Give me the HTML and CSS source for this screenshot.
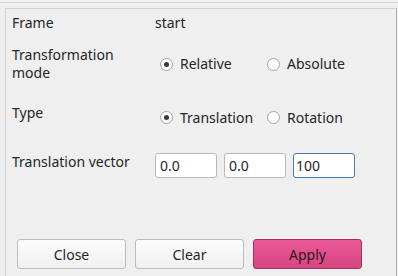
FILE: index.html
```html
<!DOCTYPE html>
<html lang="en">
<head>
  <meta charset="UTF-8" />
  <title>Transform frame</title>
  <link rel="stylesheet" href="styles.css">
</head>
<body>
  <div class="topline"></div>

  <div class="panel">
    <div class="form">
      <div class="label">Frame</div>
      <div class="value">start</div>

      <div class="label">Transformation<br>mode</div>
      <div class="value options">
        <label class="radio"><span class="dot checked"></span>Relative</label>
        <label class="radio"><span class="dot"></span>Absolute</label>
      </div>

      <div class="label top type">Type</div>
      <div class="value options shifted">
        <label class="radio"><span class="dot checked"></span>Translation</label>
        <label class="radio"><span class="dot"></span>Rotation</label>
      </div>

      <div class="label top vector">Translation vector</div>
      <div class="value fields">
        <input type="text" value="0.0">
        <input type="text" value="0.0">
        <input type="text" value="100" class="focused">
      </div>
    </div>

    <div class="actions">
      <button>Close</button>
      <button>Clear</button>
      <button class="primary">Apply</button>
    </div>
  </div>
</body>
</html>
```

FILE: styles.css
```css
* {
  box-sizing: border-box;
}

body {
  margin: 0;
  background: #efefef;
  font-family: "Noto Sans", sans-serif;
  font-size: 14px;
  color: #232627;
  height: 276px;
  overflow: hidden;
}

.topline {
  height: 3px;
  border-bottom: 1px solid #d6d6d6;
}

.panel {
  margin: 5px 1px 0 5px;
  height: 268px;
  border: 1px solid #d2d2d2;
  border-bottom: none;
  border-right-color: #acacac;
  padding: 0 0 0 6px;
}

.form {
  display: grid;
  grid-template-columns: 143px 1fr;
  grid-template-rows: 26px 56px 47px 52px;
  align-items: center;
  line-height: 18px;
  padding-top: 1px;
}

.label.top {
  align-self: start;
}

.label.type {
  margin-top: 12px;
}

.label.vector {
  margin-top: 14px;
}

.options {
  display: flex;
  padding-left: 5px;
}

.options.shifted {
  padding-top: 4px;
}

.radio {
  display: flex;
  align-items: center;
  gap: 7px;
  width: 107px;
}

.dot {
  width: 13px;
  height: 13px;
  border-radius: 50%;
  border: 1px solid #a4a4a4;
  background: #fff;
  display: flex;
  align-items: center;
  justify-content: center;
}

.dot.checked::after {
  content: "";
  width: 5px;
  height: 5px;
  border-radius: 50%;
  background: #3a3a3a;
}

.fields {
  display: flex;
  gap: 7px;
}

.fields input {
  width: 62px;
  height: 25px;
  border: 1px solid #b8b8b8;
  border-radius: 3px;
  background: #fff;
  font: inherit;
  color: #232627;
  padding: 0 4px;
  outline: none;
}

.fields input.focused {
  border-color: #3f7ec0;
  padding-left: 2px;
}

.actions {
  display: flex;
  gap: 9px;
  margin-top: 48px;
  padding-left: 5px;
}

.actions button {
  width: 109px;
  height: 30px;
  font: inherit;
  color: #232627;
  border: 1px solid #bcbcbc;
  border-radius: 3px;
  background: linear-gradient(#fcfcfc, #f0f0f0);
}

.actions button.primary {
  background: linear-gradient(#ea5a98, #d6457f);
  border-color: #a8305f;
  color: #2a1a20;
}
```
